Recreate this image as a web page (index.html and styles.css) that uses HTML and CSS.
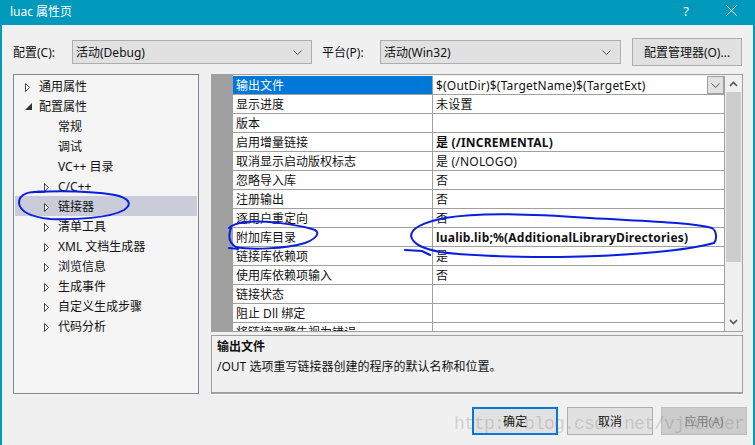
FILE: index.html
```html
<!DOCTYPE html>
<html lang="zh-CN">
<head>
    <meta charset="utf-8">
    <title>luac 属性页</title>
    <link rel="stylesheet" href="styles.css">
</head>
<body>
<div class="window">
    <div class="titlebar">
        <span class="title">luac 属性页</span>
        <span class="help">?</span>
        <svg class="close" width="11" height="11" viewBox="0 0 11 11"><path d="M0.5 0.5L10.5 10.5M10.5 0.5L0.5 10.5" stroke="#fff" fill="none"/></svg>
    </div>
    <div class="content">
        <div class="config">
            <label class="config-label">配置(C):</label>
            <div class="combo combo-config">活动(Debug)<svg class="chev" width="9" height="5" viewBox="0 0 9 5"><path d="M0.5 0.5L4.5 4.5L8.5 0.5" stroke="#555" fill="none"/></svg></div>
            <label class="platform-label">平台(P):</label>
            <div class="combo combo-platform">活动(Win32)<svg class="chev" width="9" height="5" viewBox="0 0 9 5"><path d="M0.5 0.5L4.5 4.5L8.5 0.5" stroke="#555" fill="none"/></svg></div>
            <button class="btn btn-manager">配置管理器(O)...</button>
        </div>
        <div class="main">
            <ul class="tree">
                <li><svg class="arrow" width="5" height="9" viewBox="0 0 5 9"><path d="M0.5 0.5L4.5 4.5L0.5 8.5Z" stroke="#444" fill="#fff"/></svg>通用属性</li>
                <li><svg class="arrow" width="7" height="7" viewBox="0 0 7 7"><path d="M7 0V7H0Z" fill="#333"/></svg>配置属性</li>
                <li class="leaf">常规</li>
                <li class="leaf">调试</li>
                <li class="leaf">VC++ 目录</li>
                <li class="sub"><svg class="arrow" width="5" height="9" viewBox="0 0 5 9"><path d="M0.5 0.5L4.5 4.5L0.5 8.5Z" stroke="#444" fill="#fff"/></svg>C/C++</li>
                <li class="sub selected"><svg class="arrow" width="5" height="9" viewBox="0 0 5 9"><path d="M0.5 0.5L4.5 4.5L0.5 8.5Z" stroke="#444" fill="#fff"/></svg>链接器</li>
                <li class="sub"><svg class="arrow" width="5" height="9" viewBox="0 0 5 9"><path d="M0.5 0.5L4.5 4.5L0.5 8.5Z" stroke="#444" fill="#fff"/></svg>清单工具</li>
                <li class="sub"><svg class="arrow" width="5" height="9" viewBox="0 0 5 9"><path d="M0.5 0.5L4.5 4.5L0.5 8.5Z" stroke="#444" fill="#fff"/></svg>XML 文档生成器</li>
                <li class="sub"><svg class="arrow" width="5" height="9" viewBox="0 0 5 9"><path d="M0.5 0.5L4.5 4.5L0.5 8.5Z" stroke="#444" fill="#fff"/></svg>浏览信息</li>
                <li class="sub"><svg class="arrow" width="5" height="9" viewBox="0 0 5 9"><path d="M0.5 0.5L4.5 4.5L0.5 8.5Z" stroke="#444" fill="#fff"/></svg>生成事件</li>
                <li class="sub"><svg class="arrow" width="5" height="9" viewBox="0 0 5 9"><path d="M0.5 0.5L4.5 4.5L0.5 8.5Z" stroke="#444" fill="#fff"/></svg>自定义生成步骤</li>
                <li class="sub"><svg class="arrow" width="5" height="9" viewBox="0 0 5 9"><path d="M0.5 0.5L4.5 4.5L0.5 8.5Z" stroke="#444" fill="#fff"/></svg>代码分析</li>
            </ul>
            <div class="right">
                <div class="grid">
                    <div class="gutter"></div>
                    <div class="rows">
                        <div class="row active"><div class="name">输出文件</div><div class="value">$(OutDir)$(TargetName)$(TargetExt)<span class="dropdown"><svg width="9" height="5" viewBox="0 0 9 5"><path d="M0.5 0.5L4.5 4.5L8.5 0.5" stroke="#555" fill="none"/></svg></span></div></div>
                        <div class="row"><div class="name">显示进度</div><div class="value">未设置</div></div>
                        <div class="row"><div class="name">版本</div><div class="value"></div></div>
                        <div class="row"><div class="name">启用增量链接</div><div class="value bold">是 (/INCREMENTAL)</div></div>
                        <div class="row"><div class="name">取消显示启动版权标志</div><div class="value">是 (/NOLOGO)</div></div>
                        <div class="row"><div class="name">忽略导入库</div><div class="value">否</div></div>
                        <div class="row"><div class="name">注册输出</div><div class="value">否</div></div>
                        <div class="row"><div class="name">逐用户重定向</div><div class="value">否</div></div>
                        <div class="row"><div class="name">附加库目录</div><div class="value bold">lualib.lib;%(AdditionalLibraryDirectories)</div></div>
                        <div class="row"><div class="name">链接库依赖项</div><div class="value">是</div></div>
                        <div class="row"><div class="name">使用库依赖项输入</div><div class="value">否</div></div>
                        <div class="row"><div class="name">链接状态</div><div class="value"></div></div>
                        <div class="row"><div class="name">阻止 Dll 绑定</div><div class="value"></div></div>
                        <div class="row"><div class="name">将链接器警告视为错误</div><div class="value"></div></div>
                    </div>
                    <div class="scrollbar">
                        <svg width="9" height="6" viewBox="0 0 9 6"><path d="M1 5L4.5 1.5L8 5" stroke="#555" stroke-width="1.6" fill="none"/></svg>
                        <div class="thumb"></div>
                        <svg width="9" height="6" viewBox="0 0 9 6"><path d="M1 1L4.5 4.5L8 1" stroke="#555" stroke-width="1.6" fill="none"/></svg>
                    </div>
                </div>
                <div class="desc">
                    <div class="bold">输出文件</div>
                    <div class="desc-text">/OUT 选项重写链接器创建的程序的默认名称和位置。</div>
                </div>
            </div>
        </div>
        <div class="buttons">
            <button class="btn btn-ok">确定</button>
            <button class="btn">取消</button>
            <button class="btn btn-off">应用(A)</button>
        </div>
    </div>
    <svg class="ink" width="755" height="445" viewBox="0 0 755 445">
        <path d="M45 192C30 191 19 193 19 203C20 212 32 217 50 219C75 220 110 218 124 210C133 204 129 198 115 195C90 191 55 191 33 192"/>
        <path d="M231 228C228 236 229 243 236 247C250 250 285 249 305 243C320 237 320 231 312 229C295 224 262 220 245 222C238 223 232 225 229 228M229 248L238 249"/>
        <path d="M411 236C411 228 425 222 445 218C480 212 530 214 590 218C640 221 690 222 712 228C717 231 717 240 714 243C690 250 630 256 560 257C510 257 470 256 440 252C425 249 413 245 411 236M405 250L422 251L430 255"/>
    </svg>
    <div class="watermark">http://blog.csdn.net/vjhonder</div>
</div>
</body>
</html>
```

FILE: styles.css
```css
html, body {
    margin: 0;
    height: 100%;
    overflow: hidden;
}
body {
    font-family: "Noto Sans", "Noto Sans CJK SC", sans-serif;
    font-size: 12px;
    color: #111;
}
ul {
    margin: 0;
    padding: 0;
    list-style: none;
}
.window {
    position: relative;
    width: 755px;
    height: 445px;
    box-sizing: border-box;
    display: flex;
    flex-direction: column;
    background: #f0f0f0;
    border-left: 2px solid #0099bc;
    border-right: 2px solid #0099bc;
}
.titlebar {
    height: 25px;
    flex: none;
    display: flex;
    align-items: center;
    padding: 0 16px 4px 8px;
    box-sizing: border-box;
    background: #0099bc;
    color: #fff;
}
.title {
    flex: 1;
}
.help {
    font-size: 13px;
    margin-right: 37px;
}
.content {
    flex: 1;
    display: flex;
    flex-direction: column;
    padding: 13px 10px 0 11px;
}
.config {
    display: flex;
    align-items: center;
    height: 28px;
}
.config-label {
    width: 59px;
}
.platform-label {
    width: 58px;
    margin-left: 10px;
}
.combo {
    height: 24px;
    box-sizing: border-box;
    display: flex;
    align-items: center;
    justify-content: space-between;
    padding: 0 9px 0 3px;
    border: 1px solid #adadad;
    background: #e1e1e1;
}
.combo-config {
    width: 240px;
}
.combo-platform {
    width: 241px;
}
.btn {
    font: inherit;
    color: inherit;
    height: 28px;
    width: 86px;
    padding: 0;
    border: 1px solid #adadad;
    background: #e1e1e1;
}
.btn-manager {
    width: 110px;
    margin-left: 11px;
}
.main {
    display: flex;
    margin-top: 8px;
    height: 320px;
}
.tree {
    width: 186px;
    box-sizing: border-box;
    padding-top: 1px;
    border: 1px solid #828790;
    background: #f5f5f5;
}
.tree li {
    height: 20px;
    line-height: 22px;
    padding-left: 25px;
    position: relative;
}
.tree li.leaf, .tree li.sub {
    padding-left: 44px;
}
.tree li.selected {
    background: #cacdd9;
    margin: 0 1px 0 1px;
    padding-left: 43px;
}
.arrow {
    position: absolute;
    left: 11px;
    top: 7px;
}
.sub .arrow {
    left: 30px;
}
.selected .arrow {
    left: 29px;
}
.right {
    margin-left: 12px;
    width: 532px;
    display: flex;
    flex-direction: column;
}
.grid {
    display: flex;
    height: 258px;
    box-sizing: border-box;
    border: 1px solid #a0a0a0;
    background: #f0f0f0;
    overflow: hidden;
}
.gutter {
    width: 21px;
    flex: none;
    background: #a0a0a0;
}
.rows {
    flex: 1;
    min-width: 0;
    padding-top: 1px;
}
.row {
    display: flex;
    height: 19px;
    box-sizing: border-box;
    border-bottom: 1px solid #a0a0a0;
    border-right: 1px solid #a0a0a0;
    background: #fff;
    line-height: 20px;
}
.name {
    width: 200px;
    flex: none;
    box-sizing: border-box;
    padding-left: 3px;
    border-right: 1px solid #a0a0a0;
}
.value {
    flex: 1;
    padding-left: 3px;
    position: relative;
    letter-spacing: 0.2px;
}
.active .name {
    background: #0078d7;
    color: #fff;
}
.dropdown {
    position: absolute;
    right: 0;
    top: 0;
    width: 17px;
    height: 18px;
    box-sizing: border-box;
    border: 1px solid #a0a0a0;
    background: #e1e1e1;
    display: flex;
    align-items: center;
    justify-content: center;
}
.bold {
    font-weight: 700;
}
.scrollbar {
    width: 17px;
    flex: none;
    display: flex;
    flex-direction: column;
    align-items: center;
    padding: 6px 0;
    box-sizing: border-box;
    background: #f0f0f0;
}
.thumb {
    width: 15px;
    height: 170px;
    margin: 5px 0 auto;
    background: #cdcdcd;
}
.desc {
    margin-top: 3px;
    height: 59px;
    box-sizing: border-box;
    padding: 1px 5px;
    border: 1px solid #a0a0a0;
    border-bottom-width: 2px;
    box-shadow: 0 1px 0 #fff;
    line-height: 20px;
}
.buttons {
    display: flex;
    justify-content: flex-end;
    gap: 8px;
    margin: 13px -4px 0 0;
}
.btn-ok {
    border: 2px solid #0078d7;
    margin-right: 1px;
}
.btn-off {
    color: #838383;
    background: #ccc;
    border-color: #bfbfbf;
}
.ink {
    position: absolute;
    left: -2px;
    top: 0;
    pointer-events: none;
}
.ink path {
    fill: none;
    stroke: #0a1ee0;
    stroke-width: 2;
    stroke-linecap: round;
}
.watermark {
    position: absolute;
    left: 452px;
    top: 414px;
    font-family: "Liberation Mono", monospace;
    font-size: 18px;
    letter-spacing: -0.8px;
    color: rgba(110, 110, 110, 0.25);
}
```
